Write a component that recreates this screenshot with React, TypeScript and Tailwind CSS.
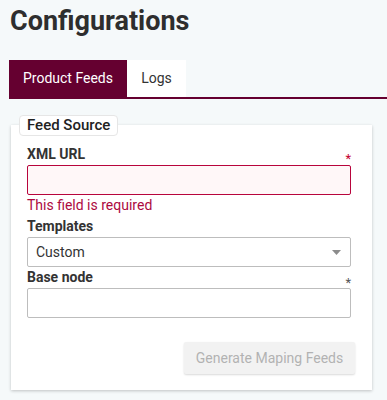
import React from "react";

export default function App() {
  return (
    <div className="min-h-[400px] w-full bg-[#f5f9fa] font-['Roboto',sans-serif] text-[#333]">
      <h1 className="pl-[10px] pt-[5px] text-[27px] font-bold leading-[32px] text-[#2e2e2e]">
        Configurations
      </h1>
      <div className="ml-[9px] mt-[23px] flex border-b-2 border-[#650030]">
        <div className="flex h-[37px] w-[118px] items-center justify-center bg-[#650030] text-[14px] text-white">
          Product Feeds
        </div>
        <div className="flex h-[37px] w-[59px] items-center justify-center bg-white text-[14px] text-[#333]">
          Logs
        </div>
      </div>
      <div className="relative ml-[11px] mr-[15px] mt-[26px] bg-white px-[16px] pr-[21px] pb-[16px] pt-[21px] shadow-[0_1px_3px_rgba(0,0,0,0.22)]">
        <div className="absolute left-[8px] top-[-10px] flex h-[21px] items-center rounded-[4px] border border-[#e6e6e6] bg-white px-[7px] text-[15px] font-medium leading-none text-[#222]">
          Feed Source
        </div>

        <div className="relative flex h-[16px] items-center text-[14px] font-bold leading-[16px]">
          XML URL
          <span className="absolute right-0 top-[5px] text-[13px] font-normal text-[#c4002f]">*</span>
        </div>
        <div className="mt-[3px] h-[30px] rounded-[2px] border border-[#b8043c] bg-[#fff7f8]" />
        <div className="mt-[2px] text-[14px] leading-[16px] text-[#ad0a3f]">This field is required</div>

        <div className="mt-[5px] flex h-[16px] items-center text-[14px] font-bold leading-[16px]">Templates</div>
        <div className="mt-[3px] flex h-[30px] items-center justify-between rounded-[2px] border border-[#bdbdbd] bg-white pl-[8px] pr-[9px]">
          <span className="text-[14px] text-[#333]">Custom</span>
          <svg width="9" height="5" viewBox="0 0 9 5" className="mt-[1px]">
            <path d="M0 0 L9 0 L4.5 5 Z" fill="#8c8c8c" />
          </svg>
        </div>

        <div className="relative mt-[2px] flex h-[16px] items-center text-[14px] font-bold leading-[16px]">
          Base node
          <span className="absolute right-0 top-[6px] text-[13px] font-normal text-[#555]">*</span>
        </div>
        <div className="mt-[3px] h-[30px] rounded-[2px] border border-[#bdbdbd] bg-white" />

        <div className="mt-[24px] flex justify-end pr-0">
          <button className="mr-[-4px] flex h-[32px] w-[171px] items-center justify-center rounded-[2px] bg-[#f2f2f2] text-[14px] text-[#b2b2b2] shadow-[0_1px_2px_rgba(0,0,0,0.15)]">
            Generate Maping Feeds
          </button>
        </div>
      </div>
    </div>
  );
}
